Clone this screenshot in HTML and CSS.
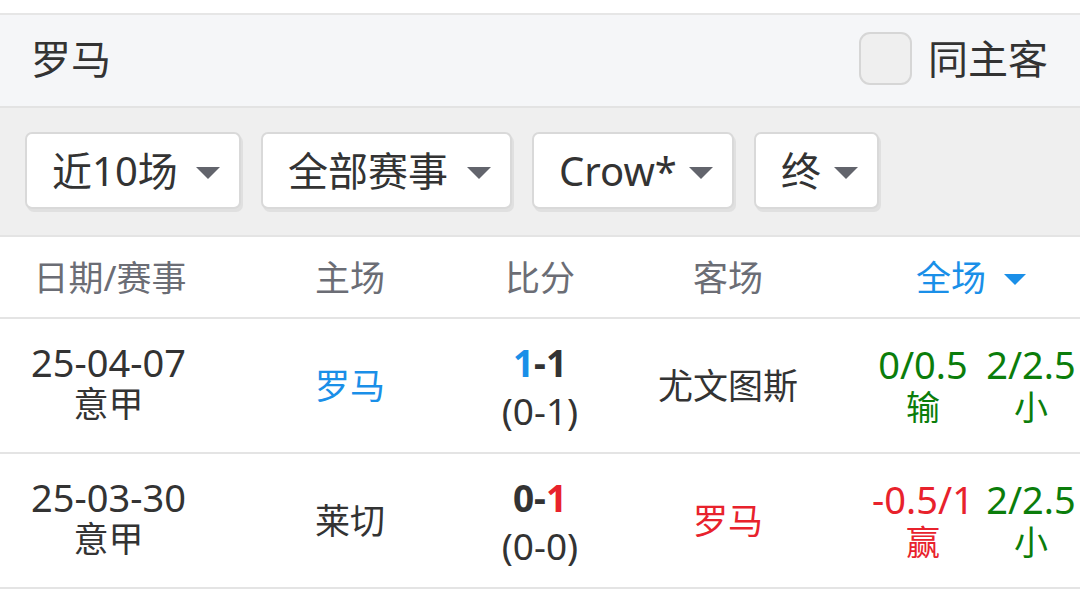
FILE: index.html
```html
<!DOCTYPE html>
<html lang="zh-CN">
<head>
<meta charset="utf-8">
<title>罗马</title>
<link rel="stylesheet" href="styles.css">
</head>
<body>
<div class="page">
  <div class="gap"></div>
  <div class="teambar">
    <div class="team-name">罗马</div>
    <label class="same">
      <span class="checkbox"></span>
      <span class="same-text">同主客</span>
    </label>
  </div>
  <div class="filters">
    <div class="btn btn-1"><span>近10场</span><i class="tri"></i></div>
    <div class="btn btn-2"><span>全部赛事</span><i class="tri"></i></div>
    <div class="btn btn-3"><span>Crow*</span><i class="tri"></i></div>
    <div class="btn btn-4"><span>终</span><i class="tri"></i></div>
  </div>
  <div class="table">
    <div class="row head">
      <div class="cell">日期/赛事</div>
      <div class="cell">主场</div>
      <div class="cell">比分</div>
      <div class="cell">客场</div>
      <div class="cell odds-head"><span>全场</span><i class="tri blue"></i></div>
    </div>
    <div class="row match">
      <div class="cell date"><div>25-04-07</div><div class="league">意甲</div></div>
      <div class="cell team blue-t">罗马</div>
      <div class="cell score"><div class="ft"><span class="blue-t">1</span>-1</div><div class="ht">(0-1)</div></div>
      <div class="cell team">尤文图斯</div>
      <div class="cell odds">
        <div class="odd green"><div>0/0.5</div><div class="res">输</div></div>
        <div class="odd green"><div>2/2.5</div><div class="res">小</div></div>
      </div>
    </div>
    <div class="row match">
      <div class="cell date"><div>25-03-30</div><div class="league">意甲</div></div>
      <div class="cell team">莱切</div>
      <div class="cell score"><div class="ft">0-<span class="red">1</span></div><div class="ht">(0-0)</div></div>
      <div class="cell team red">罗马</div>
      <div class="cell odds">
        <div class="odd red"><div>-0.5/1</div><div class="res">赢</div></div>
        <div class="odd green"><div>2/2.5</div><div class="res">小</div></div>
      </div>
    </div>
  </div>
</div>
</body>
</html>
```
FILE: styles.css
```css
* { box-sizing: border-box; }
html, body {
  margin: 0;
  padding: 0;
  background: #ffffff;
  overflow: hidden;
}
body {
  font-family: "Noto Sans", "Noto Sans CJK SC", sans-serif;
  color: #333333;
  width: 1080px;
}
.gap { height: 13px; background: #fff; }
.teambar {
  height: 95px;
  background: #f5f6f8;
  border-top: 2px solid #e6e6e6;
  border-bottom: 2px solid #e3e3e3;
  display: flex;
  align-items: center;
  justify-content: space-between;
  padding: 0 32px 4px 31px;
}
.team-name {
  font-size: 40px;
  line-height: 1;
  color: #333;
}
.same {
  display: flex;
  align-items: center;
  gap: 16px;
}
.checkbox {
  width: 53px;
  height: 53px;
  border: 2px solid #d6d6d6;
  border-radius: 11px;
  background: #efefef;
}
.same-text {
  font-size: 40px;
  line-height: 1;
  color: #333;
}
.filters {
  height: 129px;
  background: #efefef;
  border-bottom: 2px solid #e4e4e4;
  display: flex;
  align-items: center;
  gap: 20px;
  padding: 0 0 2px 25px;
}
.btn {
  height: 77px;
  display: flex;
  align-items: center;
  justify-content: space-between;
  padding: 0 19px 0 25px;
  background: #fff;
  border: 2px solid #d9d9d9;
  border-radius: 7px;
  box-shadow: 2px 3px 0 #e0e0e0;
  font-size: 40px;
  line-height: 1;
  color: #333;
  white-space: nowrap;
}
.btn-1 { width: 216px; }
.btn-2 { width: 251px; }
.btn-3 { width: 202px; }
.btn-4 { width: 125px; }
.tri {
  flex: none;
  width: 0;
  height: 0;
  border-left: 12px solid transparent;
  border-right: 12px solid transparent;
  border-top: 12px solid #62646c;
  margin-top: 4px;
}
.tri.blue { border-top-color: #1a8fe8; }
.table { width: 1080px; }
.row {
  display: grid;
  grid-template-columns: 220px 260px 120px 256px 224px;
  border-bottom: 2px solid #e4e4e4;
}
.cell {
  display: flex;
  flex-direction: column;
  align-items: center;
  justify-content: center;
  text-align: center;
}
.head {
  height: 82px;
  font-size: 35px;
  color: #6b6d75;
}
.head .cell { line-height: 1; }
.odds-head {
  flex-direction: row;
  gap: 18px;
  color: #1a8fe8;
  padding-left: 6px;
}
.odds-head .tri { width: 0; border-left-width: 11px; border-right-width: 11px; border-top-width: 11px; }
.match {
  height: 135px;
  font-size: 36px;
  line-height: 42px;
}
.date { font-size: 38px; padding-bottom: 5px; margin-left: -3px; }
.league { font-size: 35px; }
.team { font-size: 35px; }
.score { line-height: 48px; padding-top: 2px; }
.ft { font-weight: bold; font-size: 37px; }
.ht { font-size: 37px; }
.odds {
  display: grid;
  grid-template-columns: 108px 108px;
  align-items: center;
  justify-content: start;
  margin-left: 13px;
}
.odd {
  display: flex;
  flex-direction: column;
  align-items: center;
  font-size: 38px;
  line-height: 43px;
  white-space: nowrap;
}
.res { font-size: 34px; }
.blue-t { color: #1a8fe8; }
.green { color: #0b7d0b; }
.red { color: #e8222c; }
```
